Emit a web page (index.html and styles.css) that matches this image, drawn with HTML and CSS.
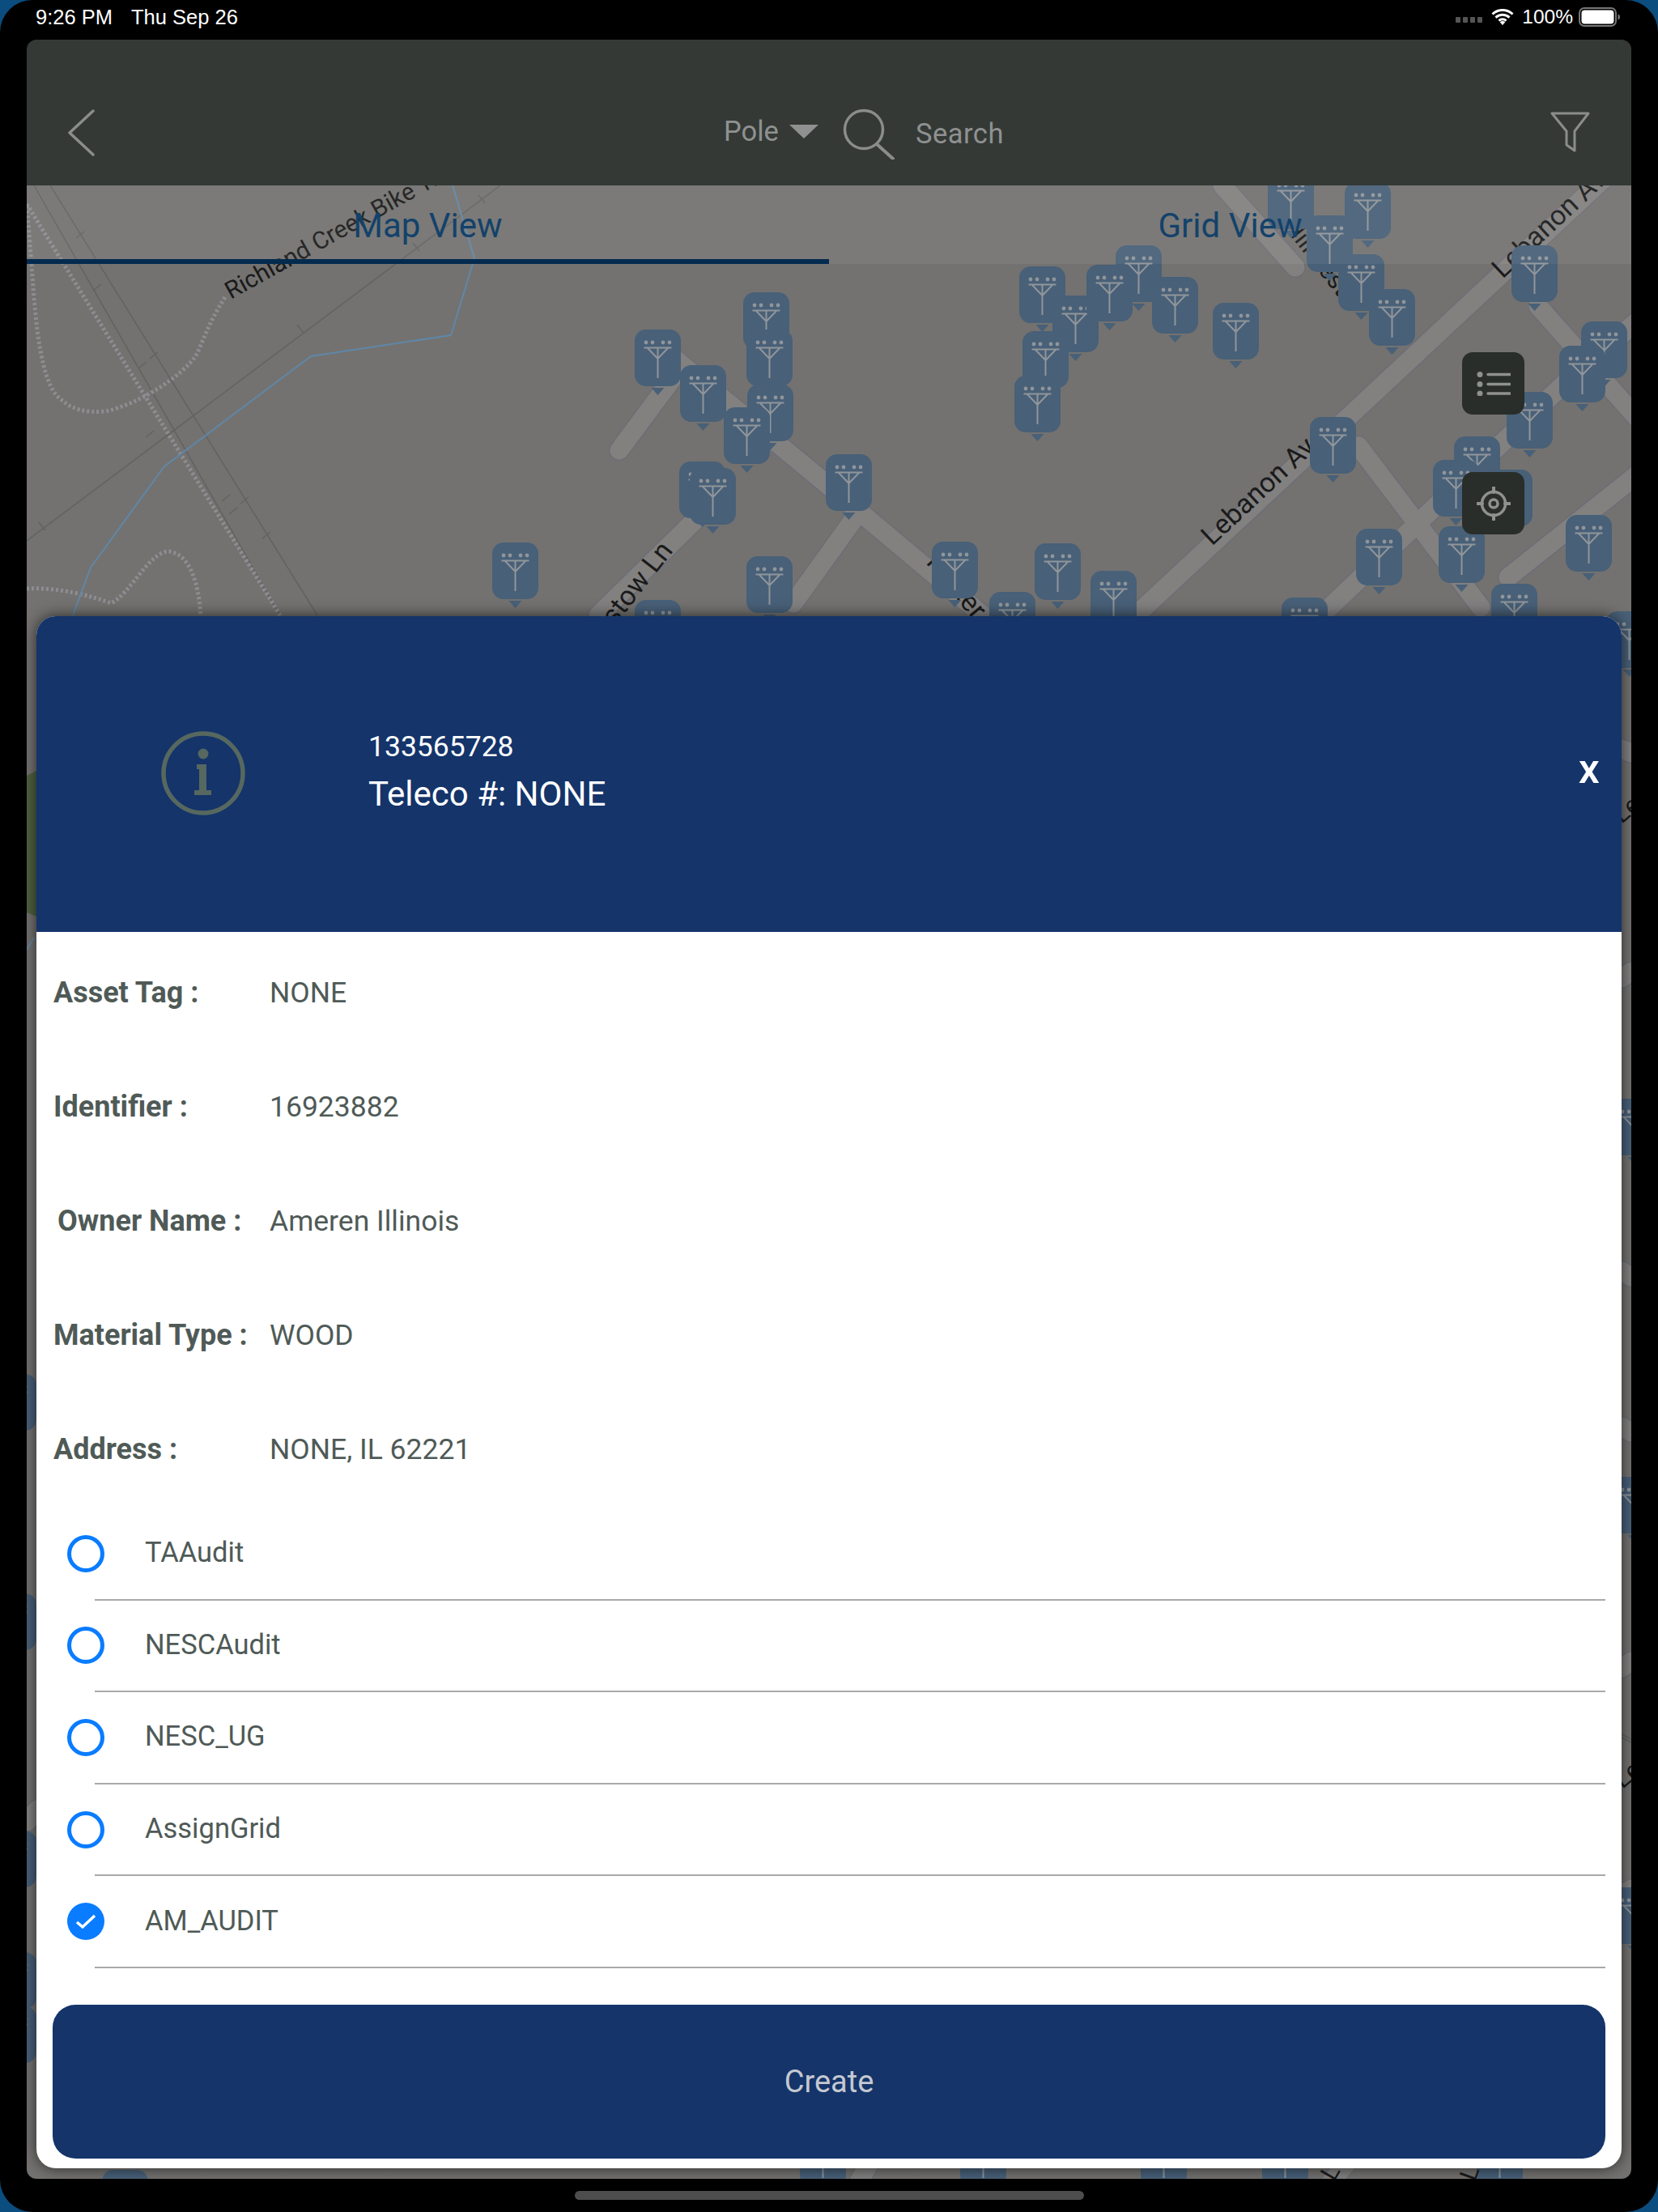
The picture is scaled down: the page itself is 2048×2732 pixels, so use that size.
FILE: index.html
```html
<!DOCTYPE html>
<html lang="en">
<head>
<meta charset="utf-8">
<title>Pole Map</title>
<link rel="stylesheet" href="styles.css">
</head>
<body>
<div class="device">
  <div class="status">
    <div class="status-left"><span>9:26 PM</span><span>Thu Sep 26</span></div>
    <div class="status-right">
      <svg class="sig" width="34" height="8" viewBox="0 0 34 8"><g fill="#555"><rect x="0" y="1" width="6" height="7" rx="1"/><rect x="9" y="1" width="6" height="7" rx="1"/><rect x="18" y="1" width="6" height="7" rx="1"/><rect x="27" y="1" width="6" height="7" rx="1"/></g></svg>
      <svg class="wifi" width="28" height="20" viewBox="0 0 28 20"><path d="M1.5 6.5a18 18 0 0 1 25 0M5.5 10.7a12.4 12.4 0 0 1 17 0M9.5 14.6a6.6 6.6 0 0 1 9 0" fill="none" stroke="#fff" stroke-width="3"/><path d="M14 20l-3.2-3.6a4.6 4.6 0 0 1 6.4 0z" fill="#fff"/></svg>
      <span class="pct">100%</span>
      <svg class="batt" width="52" height="24" viewBox="0 0 52 24"><rect x="1" y="1" width="45" height="22" rx="6" fill="none" stroke="#777" stroke-width="2"/><rect x="3.5" y="3.500" width="40" height="17" rx="4" fill="#fff"/><path d="M48.500 8.500c1.800.4 2.500 1.700 2.500 3.500s-.7 3.100-2.500 3.500z" fill="#777"/></svg>
    </div>
  </div>

  <div class="screen">
    <header class="topbar">
      <svg class="back" width="33" height="58" viewBox="0 0 33 58"><path d="M31 2L2 29l29 27" fill="none" stroke="#8b8d8b" stroke-width="3.500" stroke-linecap="round" stroke-linejoin="round"/></svg>
      <div class="searchgroup">
        <span class="pole">Pole</span>
        <svg class="caret" width="36" height="17" viewBox="0 0 36 17"><path d="M0 0h36L18 17z" fill="#8f9190"/></svg>
        <svg class="lens" width="64" height="63" viewBox="0 0 64 63"><circle cx="26" cy="26" r="23.500" fill="none" stroke="#8b8d8b" stroke-width="3.500"/><path d="M42 44l20 18" fill="none" stroke="#8b8d8b" stroke-width="4" stroke-linecap="round"/></svg>
        <span class="search">Search</span>
      </div>
      <svg class="filter" width="49" height="50" viewBox="0 0 49 50"><path d="M2 2h45L30 24v24l-10-7V24z" fill="none" stroke="#8b8d8b" stroke-width="3" stroke-linejoin="round"/></svg>
    </header>

    <div class="mapwrap">
      <svg class="map" viewBox="33 229 1982 2462" width="1982" height="2462">
        <defs>
          <g id="pin">
            <rect width="57" height="70" rx="14" fill="#486078"/>
            <path d="M20.500 72h16l-8 9z" fill="#486078"/>
            <g fill="#90959a"><circle cx="14" cy="16" r="2.400"/><circle cx="22" cy="16" r="2.400"/><circle cx="35" cy="16" r="2.400"/><circle cx="43" cy="16" r="2.400"/></g>
            <path d="M11.500 22.500h34M16 23l12.500 13L41 23M28.500 22.500V60" fill="none" stroke="#90959a" stroke-width="2"/>
          </g>
          <g id="roads" fill="none">
            <path d="M1403 760L1867 327L2030 175"/>
            <path d="M765 556L843 451L1020 597L1214 760"/>
            <path d="M863 638L739 760"/>
            <path d="M980 745L1057 638"/>
            <path d="M1678 551L1829 750"/>
            <path d="M1900 378L2030 525"/>
            <path d="M1632 760L1933 473L2030 390"/>
            <path d="M1863 713L2030 580"/>
            <path d="M1510 229L1600 330"/>
            <path d="M33 2250L46 2235"/>
            <path d="M2003 925L2015 930"/>
            <path d="M2003 1208L2015 1200"/>
            <path d="M2003 1570L2015 1577"/>
            <path d="M2003 1762L2015 1769"/>
            <path d="M2003 2060L2015 2052"/>
            <path d="M2003 2340L2015 2333"/>
            <path d="M1058 2700L1075 2670"/>
            <path d="M1640 2700L1665 2670"/>
          </g>
        </defs>
        <rect x="33" y="229" width="1982" height="2462" fill="#737270"/>
        <path d="M33 958l12-6v180l-12-5z" fill="#4e6141"/>
        <use href="#roads" class="road-edge"/>
        <use href="#roads" class="road"/>
        <g class="rail">
          <path d="M62 229L392 760"/><path d="M42 229L346 760"/><path d="M618 229L33 668"/>
          <path d="M2003 2142L2015 2148M2003 2146L2015 2152"/>
          <path d="M94 294l10-8M115 359l10-8M185 443l10-8M171 455l10-8M180 540l10-8M274 619l10-8M297 622l10-8M283 635l10-8M324 665l10-8M48 645l8 10M367 401l8 10M510 300l8 10M591 241l8 10"/>
        </g>
        <path d="M33 252L346 760" class="dots"/>
        <path d="M278 367C255 403 250 425 242 439C225 465 170 500 130 508C105 510 88 505 78 495C50 480 44 400 39 327L33 252" class="dots"/>
        <path d="M33 727C70 725 110 735 137 745C160 735 185 680 209 681C235 685 245 720 248 760" class="dots"/>
        <path d="M559 229L586 319L557 414L384 440L203 576L112 701L90 760" class="water"/>
        <path d="M33 1173L42 1158" class="water"/>
        <text class="label" transform="translate(285 370) rotate(-29)">Richland Creek Bike Trail</text>
        <text class="label label-lg" transform="translate(1497 675) rotate(-43)">Lebanon Ave</text>
        <text class="label label-lg" transform="translate(1856 345) rotate(-43)">Lebanon Ave</text>
        <text class="label label-lg" transform="translate(734 806) rotate(-52)">Bristow Ln</text>
        <text class="label label-lg" transform="translate(1143 695) rotate(50)">Ricker</text>
        <text class="label" transform="translate(1585 280) rotate(52)">Hillcrest</text>
        <text class="label" transform="translate(2003 1018) rotate(-40)">Le</text>
        <text class="label" transform="translate(2004 2210) rotate(-40)">Le</text>
        <use href="#pin" x="784" y="407"/><use href="#pin" x="918" y="361"/><use href="#pin" x="922" y="407"/>
        <use href="#pin" x="923" y="475"/><use href="#pin" x="840" y="451"/><use href="#pin" x="894" y="503"/>
        <use href="#pin" x="839" y="570"/><use href="#pin" x="852" y="578"/><use href="#pin" x="608" y="670"/>
        <use href="#pin" x="922" y="687"/><use href="#pin" x="784" y="741"/><use href="#pin" x="1020" y="561"/>
        <use href="#pin" x="1378" y="303"/><use href="#pin" x="1259" y="329"/><use href="#pin" x="1300" y="365"/>
        <use href="#pin" x="1342" y="327"/><use href="#pin" x="1423" y="342"/><use href="#pin" x="1498" y="374"/>
        <use href="#pin" x="1263" y="409"/><use href="#pin" x="1253" y="464"/><use href="#pin" x="1566" y="213"/>
        <use href="#pin" x="1661" y="225"/><use href="#pin" x="1614" y="266"/><use href="#pin" x="1653" y="314"/>
        <use href="#pin" x="1691" y="357"/><use href="#pin" x="1867" y="303"/><use href="#pin" x="1953" y="397"/>
        <use href="#pin" x="1926" y="427"/><use href="#pin" x="1861" y="484"/><use href="#pin" x="1618" y="515"/>
        <use href="#pin" x="1796" y="539"/><use href="#pin" x="1770" y="568"/><use href="#pin" x="1836" y="580"/>
        <use href="#pin" x="1777" y="650"/><use href="#pin" x="1675" y="653"/><use href="#pin" x="1934" y="636"/>
        <use href="#pin" x="1151" y="669"/><use href="#pin" x="1278" y="671"/><use href="#pin" x="1347" y="705"/>
        <use href="#pin" x="1222" y="731"/><use href="#pin" x="1583" y="738"/><use href="#pin" x="1842" y="721"/>
        <use href="#pin" x="1984" y="755"/>
        <use href="#pin" x="-12" y="1697"/><use href="#pin" x="-12" y="1968"/><use href="#pin" x="-12" y="2261"/>
        <use href="#pin" x="-12" y="2411"/><use href="#pin" x="-12" y="2478"/>
        <use href="#pin" x="1990" y="1357"/><use href="#pin" x="1990" y="1824"/><use href="#pin" x="1990" y="2331"/>
        <use href="#pin" x="226" y="2598"/><use href="#pin" x="324" y="2598"/><use href="#pin" x="452" y="2598"/>
        <use href="#pin" x="126" y="2680"/><use href="#pin" x="988" y="2630"/><use href="#pin" x="1104" y="2598"/>
        <use href="#pin" x="1186" y="2630"/><use href="#pin" x="1409" y="2630"/><use href="#pin" x="1559" y="2630"/>
        <use href="#pin" x="1824" y="2630"/><use href="#pin" x="1866" y="2598"/>
        <text class="label" transform="translate(1648 2695) rotate(-60)">Le</text>
        <text class="label" transform="translate(1822 2695) rotate(-70)">Le</text>
      </svg>

      <nav class="tabs">
        <div class="tab tab-on">Map View</div>
        <div class="tab">Grid View</div>
      </nav>

      <button class="fab fab-list" aria-label="List">
        <svg width="42" height="30" viewBox="0 0 42 30"><g fill="#8f918f"><circle cx="4" cy="3.500" r="3.500"/><circle cx="4" cy="15.500" r="3.500"/><circle cx="4" cy="27" r="3.500"/></g><path d="M14 3.500h27M14 15.500h27M14 27h27" stroke="#8f918f" stroke-width="3.500" stroke-linecap="round"/></svg>
      </button>
      <button class="fab fab-loc" aria-label="Locate">
        <svg width="42" height="42" viewBox="0 0 42 42"><g fill="none" stroke="#8f918f"><circle cx="21" cy="21" r="14.500" stroke-width="3.500"/><circle cx="21" cy="21" r="5" stroke-width="3.500"/><path d="M21 1v6M21 35v6M1 21h6M35 21h6" stroke-width="4" stroke-linecap="round"/></g></svg>
      </button>
    </div>

    <section class="modal">
      <div class="modal-head">
        <svg class="info" width="104" height="104" viewBox="0 0 104 104"><circle cx="52" cy="52" r="49" fill="none" stroke="#56685f" stroke-width="5.500"/><circle cx="52" cy="28" r="6.500" fill="#56685f"/><path d="M44 41h12v32h6v6H41v-6h6V47h-3z" fill="#56685f"/></svg>
        <div class="head-text">
          <div class="head-id">133565728</div>
          <div class="head-sub">Teleco #: NONE</div>
        </div>
        <div class="close">x</div>
      </div>
      <div class="details">
        <div class="row"><span class="key">Asset Tag :</span><span class="val">NONE</span></div>
        <div class="row"><span class="key">Identifier :</span><span class="val">16923882</span></div>
        <div class="row"><span class="key key-inset">Owner Name :</span><span class="val">Ameren Illinois</span></div>
        <div class="row"><span class="key">Material Type :</span><span class="val">WOOD</span></div>
        <div class="row"><span class="key">Address :</span><span class="val">NONE, IL 62221</span></div>
      </div>
      <ul class="audits">
        <li class="audit"><span class="radio"></span><span class="audit-name">TAAudit</span></li>
        <li class="audit"><span class="radio"></span><span class="audit-name">NESCAudit</span></li>
        <li class="audit"><span class="radio"></span><span class="audit-name">NESC_UG</span></li>
        <li class="audit"><span class="radio"></span><span class="audit-name">AssignGrid</span></li>
        <li class="audit"><span class="radio radio-on"><svg width="26" height="20" viewBox="0 0 26 20"><path d="M2 11l7 6L24 3" fill="none" stroke="#fff" stroke-width="3.500"/></svg></span><span class="audit-name">AM_AUDIT</span></li>
      </ul>
      <button class="create">Create</button>
    </section>
  </div>

  <div class="homebar"></div>
</div>
</body>
</html>
```
FILE: styles.css
```css
* { box-sizing: border-box; }
html, body { margin: 0; padding: 0; }
body {
  width: 2048px;
  height: 2732px;
  overflow: hidden;
  background: #0b4d7e;
  font-family: Roboto, "Liberation Sans", sans-serif;
}
.device {
  width: 2048px;
  height: 2732px;
  background: #000;
  border-radius: 40px;
  display: flex;
  flex-direction: column;
  align-items: center;
}
.status {
  width: 100%;
  height: 49px;
  padding: 0 46px 7px 44px;
  display: flex;
  align-items: center;
  justify-content: space-between;
  color: #fff;
  font-family: "Liberation Sans", sans-serif;
  font-size: 24.500px;
}
.status-left { display: flex; gap: 23px; font-size: 25.500px; }
.status-right { display: flex; align-items: center; }
.sig { margin-right: 10px; margin-top: 6px; }
.wifi { margin-right: 10px; }
.pct { margin-right: 7px; }
.screen {
  position: relative;
  width: 1982px;
  height: 2642px;
  border-radius: 12px;
  overflow: hidden;
  display: flex;
  flex-direction: column;
  flex: none;
}
.topbar {
  height: 180px;
  flex: none;
  background: #343936;
  display: flex;
  align-items: center;
  padding: 0 51px 0 51px;
}
.back { margin-top: 50px; flex: none; }
.searchgroup {
  display: flex;
  align-items: center;
  margin-left: 777px;
  margin-top: 44px;
}
.pole { font-size: 34.500px; color: #8f9190; margin-top: 2px; }
.caret { margin-left: 13px; margin-top: 2px; }
.lens { margin-left: 30px; margin-top: 8px; }
.search { font-size: 34.500px; color: #8f9190; margin-left: 26px; margin-top: 7px; letter-spacing: .5px; }
.filter { margin-left: auto; margin-top: 48px; }
.mapwrap { position: relative; flex: 1; overflow: hidden; }
.map { display: block; }
.road { stroke: #828180; stroke-width: 23; stroke-linecap: round; }
.road-edge { stroke: #6d6d76; stroke-width: 26; stroke-linecap: round; }
.rail { fill: none; stroke: #626262; stroke-width: 1.500; }
.dots { fill: none; stroke: #8d8d92; stroke-width: 5; stroke-dasharray: 3 3; }
.water { fill: none; stroke: #5f87a8; stroke-width: 2; }
.label { font-family: Roboto, sans-serif; font-size: 30px; fill: #1a1a1a; }
.label-lg { font-size: 34px; }
.tabs {
  position: absolute;
  left: 0;
  top: 0;
  width: 100%;
  height: 97px;
  display: flex;
  background: rgba(255, 255, 255, .06);
}
.tab {
  width: 50%;
  height: 97px;
  padding-top: 25px;
  text-align: center;
  font-size: 42px;
  color: #13426b;
}
.tab-on { border-bottom: 6px solid #032b4f; }
.fab {
  position: absolute;
  left: 1773px;
  width: 77px;
  height: 77px;
  border: 0;
  border-radius: 13px;
  background: #292e2a;
  padding: 0;
  display: flex;
  align-items: center;
  justify-content: center;
}
.fab-list { top: 206px; }
.fab-loc { top: 354px; }
.modal {
  position: absolute;
  left: 12px;
  right: 12px;
  top: 712px;
  bottom: 13px;
  background: #fff;
  border-radius: 24px;
  box-shadow: 0 0 18px rgba(0, 0, 0, .65);
  overflow: hidden;
  display: flex;
  flex-direction: column;
}
.modal-head {
  flex: none;
  height: 390px;
  background: #14346a;
  display: flex;
  align-items: center;
  color: #fff;
  padding-left: 154px;
}
.info { flex: none; margin-top: -3px; }
.head-text { margin-left: 152px; margin-top: 2px; }
.head-id { font-size: 35.500px; line-height: 44px; }
.head-sub { font-size: 42px; line-height: 66px; margin-top: 4px; }
.close { margin-left: auto; margin-right: 27px; font-size: 52px; font-weight: 500; margin-top: -14px; }
.details { flex: none; padding-top: 4px; }
.row {
  height: 141px;
  display: flex;
  align-items: center;
  padding-left: 21px;
  font-size: 35.500px;
  color: #4f5a57;
}
.key { width: 267px; font-weight: 700; flex: none; font-size: 36px; }
.key-inset { padding-left: 5px; }
.audits { list-style: none; margin: 0; padding: 3px 0 0; flex: none; }
.audit { height: 113.600px; display: flex; }
.radio {
  flex: none;
  align-self: center;
  width: 46px;
  height: 46px;
  margin-left: 38px;
  margin-top: -2px;
  border-radius: 50%;
  border: 5px solid #0a7cff;
  display: flex;
  align-items: center;
  justify-content: center;
}
.radio-on { background: #0a7cff; border-width: 0; }
.audit-name {
  flex: 1;
  margin: 0 20px 0 -12px;
  padding: 0 0 3px 62px;
  border-bottom: 2px solid #a9a9a9;
  display: flex;
  align-items: center;
  font-size: 34.500px;
  color: #4f5a57;
}
.create {
  flex: none;
  margin: 45px 20px 0;
  height: 190px;
  border: 0;
  border-radius: 28px;
  background: #14346a;
  color: #c5c8d0;
  font-family: Roboto, sans-serif;
  font-size: 38px;
}
.homebar {
  width: 629px;
  height: 11px;
  margin-top: 15px;
  border-radius: 6px;
  background: #4d4d4d;
  flex: none;
}
```
